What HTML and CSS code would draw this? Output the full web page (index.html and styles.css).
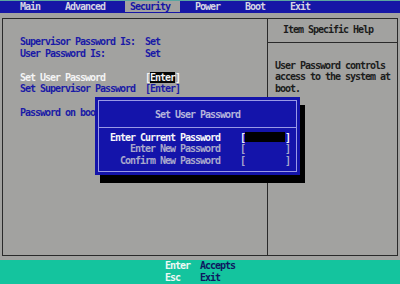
FILE: index.html
```html
<!DOCTYPE html>
<html lang="en">
<head>
    <meta charset="UTF-8">
    <meta name="viewport" content="width=device-width, initial-scale=1.0">
    <title>BIOS Setup - Security</title>
    <link rel="stylesheet" href="styles.css">
</head>
<body>
    <div class="menubar"><span>    Main     Advanced    </span><span class="tab-active"> Security  </span><span>   Power     Boot     Exit</span></div>

    <div class="frame">
        <div class="settings">
            <div class="line">Supervisor Password Is:  Set</div>
            <div class="line">User Password Is:        Set</div>
            <div class="line"> </div>
            <div class="line selected">Set User Password        [<span class="field-active">Enter</span>]</div>
            <div class="line">Set Supervisor Password  [Enter]</div>
            <div class="line"> </div>
            <div class="line">Password on boo</div>
        </div>

        <div class="help">
            <div class="line help-title">Item Specific Help</div>
            <div class="help-text">
                <div class="line">User Password controls</div>
                <div class="line">access to the system at</div>
                <div class="line">boot.</div>
            </div>
        </div>
    </div>

    <div class="statusbar">
        <div class="line"><span class="key">Enter</span>  <span class="action">Accepts</span></div>
        <div class="line"><span class="key">Esc</span>    <span class="action">Exit</span></div>
    </div>

    <div class="dialog">
        <div class="dialog-inner">
            <div class="line dialog-title">Set User Password</div>
            <div class="dialog-rows">
                <div class="line current">  Enter Current Password    [<span class="pw-input"></span>]</div>
                <div class="line">      Enter New Password    [        ]</div>
                <div class="line">    Confirm New Password    [        ]</div>
            </div>
        </div>
    </div>
</body>
</html>
```

FILE: styles.css
```css
html {
    background-color: #a2a2a0;
}

body {
    margin: 0;
    height: 284px;
    overflow: hidden;
    background-color: #a2a2a0;
    font-family: "DejaVu Sans Mono", "Liberation Mono", monospace;
    font-size: 10px;
    font-weight: bold;
    letter-spacing: -1.02px;
    line-height: 11.8px;
    position: relative;
}

.line {
    height: 11.8px;
    white-space: pre;
}

/* top menu */
.menubar {
    border-top: 1px solid #5aa6a0;
    height: 12px;
    line-height: 12px;
    white-space: pre;
    background-color: #1616a6;
    color: #d4d4e4;
}

.tab-active {
    background-color: #a2a2a0;
    color: #1616a6;
}

/* main frame */
.frame {
    box-sizing: border-box;
    margin: 5.2px 2px 0 2px;
    height: 238px;
    border: 1px solid #2a2a2a;
    display: grid;
    grid-template-columns: 264px 1fr;
}

.settings {
    padding: 17.1px 0 0 17px;
    color: #1a1aa6;
}

.selected {
    color: #f4f4f4;
}

.field-active {
    background-color: #050505;
    color: #f4f4f4;
}

.help {
    border-left: 1px solid #2a2a2a;
    color: #1c1c1c;
}

.help-title {
    height: auto;
    padding: 5.3px 0 5.4px 15px;
    border-bottom: 1px solid #2a2a2a;
}

.help-text {
    margin-top: 17px;
    padding-left: 7px;
}

/* bottom key legend */
.statusbar {
    margin-top: 4.3px;
    height: 30px;
    background-color: #14c49e;
    padding-left: 165px;
}

.key {
    color: #eef8f4;
}

.action {
    color: #0e1860;
}

/* password dialog */
.dialog {
    position: absolute;
    left: 95px;
    top: 97px;
    width: 205px;
    height: 78px;
    box-sizing: border-box;
    padding: 3px;
    background-color: #1414aa;
    box-shadow: 5px 8px 0 #000;
}

.dialog-inner {
    height: 100%;
    box-sizing: border-box;
    border: 1px solid #9a9ae6;
}

.dialog-title {
    height: auto;
    padding: 7.5px 0 6.4px 0;
    text-align: center;
    color: #b4b4dc;
    border-bottom: 1px solid #9a9ae6;
}

.dialog-rows {
    padding: 4px 0 0 1px;
    color: #a8a8cc;
}

.dialog-rows .current {
    color: #f6f6fa;
}

.pw-input {
    display: inline-block;
    width: 40px;
    height: 10px;
    vertical-align: -1px;
    background-color: #000;
}
```
